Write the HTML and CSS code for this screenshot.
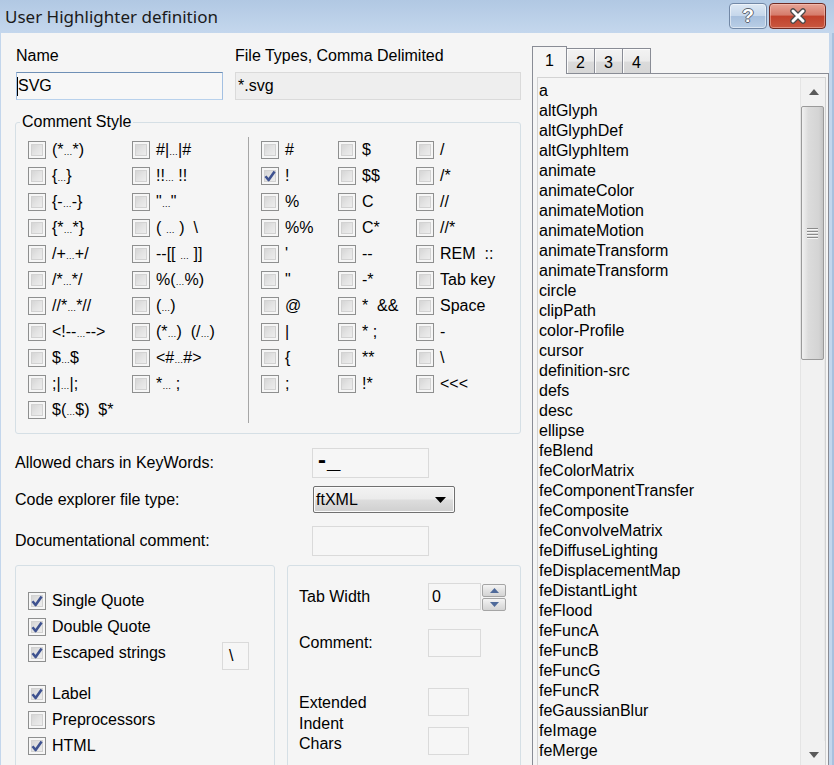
FILE: index.html
```html
<!DOCTYPE html>
<html>
<head>
<meta charset="utf-8">
<title>User Highlighter definition</title>
<link rel="stylesheet" href="styles.css">
</head>
<body>
<div class="window">
  <div class="titlebar">
    <span class="title">User Highlighter definition</span>
    <div class="caption-btns">
      <div class="cbtn help"><span class="help-q">?</span></div>
      <div class="cbtn close">
        <svg width="20" height="16" viewBox="0 0 20 16"><path d="M5 3 L15 13 M15 3 L5 13" stroke="#4a4a4a" stroke-width="5.5" stroke-linecap="round" fill="none"/><path d="M5 3 L15 13 M15 3 L5 13" stroke="#ffffff" stroke-width="3" stroke-linecap="round" fill="none"/></svg>
      </div>
    </div>
  </div>
  <div class="client">
    <div class="left">
      <div class="top-fields">
        <div class="field name-field">
          <label class="lbl">Name</label>
          <div class="input focused"><span class="caret"></span>SVG</div>
        </div>
        <div class="field types-field">
          <label class="lbl">File Types, Comma Delimited</label>
          <div class="input disabled">*.svg</div>
        </div>
      </div>

      <fieldset class="cs-group">
        <legend>Comment Style</legend>
        <div class="cs-body">
          <div class="cs-left">
            <div class="cb-item"><span class="cb"></span><span>(*<span class="el">…</span>*)</span></div>
            <div class="cb-item"><span class="cb"></span><span>#|<span class="el">…</span>|#</span></div>
            <div class="cb-item"><span class="cb"></span><span>{<span class="el">…</span>}</span></div>
            <div class="cb-item"><span class="cb"></span><span>!!<span class="el">…</span> !!</span></div>
            <div class="cb-item"><span class="cb"></span><span>{-<span class="el">…</span>-}</span></div>
            <div class="cb-item"><span class="cb"></span><span>"<span class="el">…</span>"</span></div>
            <div class="cb-item"><span class="cb"></span><span>{*<span class="el">…</span>*}</span></div>
            <div class="cb-item"><span class="cb"></span><span>( <span class="el">…</span> )  \</span></div>
            <div class="cb-item"><span class="cb"></span><span>/+<span class="el">…</span>+/</span></div>
            <div class="cb-item"><span class="cb"></span><span>--[[ <span class="el">…</span> ]]</span></div>
            <div class="cb-item"><span class="cb"></span><span>/*<span class="el">…</span>*/</span></div>
            <div class="cb-item"><span class="cb"></span><span>%(<span class="el">…</span>%)</span></div>
            <div class="cb-item"><span class="cb"></span><span>//*<span class="el">…</span>*//</span></div>
            <div class="cb-item"><span class="cb"></span><span>(<span class="el">…</span>)</span></div>
            <div class="cb-item"><span class="cb"></span><span>&lt;!--<span class="el">…</span>--&gt;</span></div>
            <div class="cb-item"><span class="cb"></span><span>(*<span class="el">…</span>)  (/<span class="el">…</span>)</span></div>
            <div class="cb-item"><span class="cb"></span><span>$<span class="el">…</span>$</span></div>
            <div class="cb-item"><span class="cb"></span><span>&lt;#<span class="el">…</span>#&gt;</span></div>
            <div class="cb-item"><span class="cb"></span><span>;|<span class="el">…</span>|;</span></div>
            <div class="cb-item"><span class="cb"></span><span>*<span class="el">…</span> ;</span></div>
            <div class="cb-item"><span class="cb"></span><span>$(<span class="el">…</span>$)  $*</span></div>
          </div>
          <div class="cs-sep"></div>
          <div class="cs-right">
            <div class="cb-item"><span class="cb"></span><span>#</span></div>
            <div class="cb-item"><span class="cb"></span><span>$</span></div>
            <div class="cb-item"><span class="cb"></span><span>/</span></div>

            <div class="cb-item"><span class="cb"><svg class="chk" viewBox="0 0 16 16"><path d="M3.5 8.2 L6.6 12 L12.6 3.6"/></svg></span><span>!</span></div>
            <div class="cb-item"><span class="cb"></span><span>$$</span></div>
            <div class="cb-item"><span class="cb"></span><span>/*</span></div>

            <div class="cb-item"><span class="cb"></span><span>%</span></div>
            <div class="cb-item"><span class="cb"></span><span>C</span></div>
            <div class="cb-item"><span class="cb"></span><span>//</span></div>

            <div class="cb-item"><span class="cb"></span><span>%%</span></div>
            <div class="cb-item"><span class="cb"></span><span>C*</span></div>
            <div class="cb-item"><span class="cb"></span><span>//*</span></div>

            <div class="cb-item"><span class="cb"></span><span>'</span></div>
            <div class="cb-item"><span class="cb"></span><span>--</span></div>
            <div class="cb-item"><span class="cb"></span><span>REM  ::</span></div>

            <div class="cb-item"><span class="cb"></span><span>"</span></div>
            <div class="cb-item"><span class="cb"></span><span>-*</span></div>
            <div class="cb-item"><span class="cb"></span><span>Tab key</span></div>

            <div class="cb-item"><span class="cb"></span><span>@</span></div>
            <div class="cb-item"><span class="cb"></span><span>*  &amp;&amp;</span></div>
            <div class="cb-item"><span class="cb"></span><span>Space</span></div>

            <div class="cb-item"><span class="cb"></span><span>|</span></div>
            <div class="cb-item"><span class="cb"></span><span>* ;</span></div>
            <div class="cb-item"><span class="cb"></span><span>-</span></div>

            <div class="cb-item"><span class="cb"></span><span>{</span></div>
            <div class="cb-item"><span class="cb"></span><span>**</span></div>
            <div class="cb-item"><span class="cb"></span><span>\</span></div>

            <div class="cb-item"><span class="cb"></span><span>;</span></div>
            <div class="cb-item"><span class="cb"></span><span>!*</span></div>
            <div class="cb-item"><span class="cb"></span><span>&lt;&lt;&lt;</span></div>
          </div>
        </div>
      </fieldset>

      <div class="opt-rows">
        <div class="opt-row r1">
          <span class="opt-lbl">Allowed chars in KeyWords:</span>
          <div class="box box-wide kw">-_</div>
        </div>
        <div class="opt-row r2">
          <span class="opt-lbl">Code explorer file type:</span>
          <div class="dropdown"><span>ftXML</span><svg class="dd-arrow" width="11" height="6" viewBox="0 0 11 6"><polygon points="0,0 11,0 5.5,6" fill="#000"/></svg></div>
        </div>
        <div class="opt-row r3">
          <span class="opt-lbl">Documentational comment:</span>
          <div class="box box-wide"></div>
        </div>
      </div>

      <div class="bottom-groups">
        <div class="grp grp-quotes">
          <div class="cb-item"><span class="cb"><svg class="chk" viewBox="0 0 16 16"><path d="M3.5 8.2 L6.6 12 L12.6 3.6"/></svg></span><span>Single Quote</span></div>
          <div class="cb-item"><span class="cb"><svg class="chk" viewBox="0 0 16 16"><path d="M3.5 8.2 L6.6 12 L12.6 3.6"/></svg></span><span>Double Quote</span></div>
          <div class="cb-item"><span class="cb"><svg class="chk" viewBox="0 0 16 16"><path d="M3.5 8.2 L6.6 12 L12.6 3.6"/></svg></span><span>Escaped strings</span><div class="box esc">\</div></div>
          <div class="cb-item gap-top"><span class="cb"><svg class="chk" viewBox="0 0 16 16"><path d="M3.5 8.2 L6.6 12 L12.6 3.6"/></svg></span><span>Label</span></div>
          <div class="cb-item"><span class="cb"></span><span>Preprocessors</span></div>
          <div class="cb-item"><span class="cb"><svg class="chk" viewBox="0 0 16 16"><path d="M3.5 8.2 L6.6 12 L12.6 3.6"/></svg></span><span>HTML</span></div>
        </div>
        <div class="grp grp-tabs">
          <div class="tw-row">
            <span class="tw-lbl">Tab Width</span>
            <div class="box box-mid">0</div>
            <div class="spin">
              <div class="spin-btn"><svg width="9" height="5" viewBox="0 0 9 5"><polygon points="0,5 9,5 4.5,0" fill="#4f6a9a"/></svg></div>
              <div class="spin-btn"><svg width="9" height="5" viewBox="0 0 9 5"><polygon points="0,0 9,0 4.5,5" fill="#4f6a9a"/></svg></div>
            </div>
          </div>
          <div class="tw-row cm-row">
            <span class="tw-lbl">Comment:</span>
            <div class="box box-mid tall"></div>
          </div>
          <div class="ext-row">
            <span class="tw-lbl ext-lbl">Extended<br>Indent<br>Chars</span>
            <div class="ext-boxes">
              <div class="box box-sm"></div>
              <div class="box box-sm"></div>
            </div>
          </div>
        </div>
      </div>
    </div>

    <div class="right">
      <div class="tabs">
        <div class="tab active">1</div>
        <div class="tab">2</div>
        <div class="tab">3</div>
        <div class="tab">4</div>
      </div>
      <div class="tab-panel">
        <div class="listbox">
          <ul class="list">
            <li>a</li>
            <li>altGlyph</li>
            <li>altGlyphDef</li>
            <li>altGlyphItem</li>
            <li>animate</li>
            <li>animateColor</li>
            <li>animateMotion</li>
            <li>animateMotion</li>
            <li>animateTransform</li>
            <li>animateTransform</li>
            <li>circle</li>
            <li>clipPath</li>
            <li>color-Profile</li>
            <li>cursor</li>
            <li>definition-src</li>
            <li>defs</li>
            <li>desc</li>
            <li>ellipse</li>
            <li>feBlend</li>
            <li>feColorMatrix</li>
            <li>feComponentTransfer</li>
            <li>feComposite</li>
            <li>feConvolveMatrix</li>
            <li>feDiffuseLighting</li>
            <li>feDisplacementMap</li>
            <li>feDistantLight</li>
            <li>feFlood</li>
            <li>feFuncA</li>
            <li>feFuncB</li>
            <li>feFuncG</li>
            <li>feFuncR</li>
            <li>feGaussianBlur</li>
            <li>feImage</li>
            <li>feMerge</li>
          </ul>
          <div class="scrollbar">
            <div class="sb-btn"><svg width="10" height="6" viewBox="0 0 10 6"><polygon points="0,6 10,6 5,0" fill="#5a5a5a"/></svg></div>
            <div class="sb-thumb"><span class="grip"></span></div>
            <div class="sb-track"></div>
            <div class="sb-btn"><svg width="10" height="6" viewBox="0 0 10 6"><polygon points="0,0 10,0 5,6" fill="#5a5a5a"/></svg></div>
          </div>
        </div>
      </div>
    </div>
  </div>
</div>
</body>
</html>
```
FILE: styles.css
```css
* { box-sizing: border-box; }
html, body { margin: 0; padding: 0; }
body {
  width: 834px;
  height: 765px;
  overflow: hidden;
  font-family: "Liberation Sans", Arial, sans-serif;
  font-size: 16px;
  color: #000;
  background: #f5f5f5;
}
.window {
  width: 834px;
  height: 765px;
  display: flex;
  flex-direction: column;
  background: #c3d6ec;
  box-shadow: inset -2px 0 0 #a8c1de, inset -1px 0 0 #d7e6f5;
  overflow: hidden;
}

/* Title bar */
.titlebar {
  height: 33px;
  flex: none;
  display: flex;
  align-items: flex-start;
  padding-left: 5px;
  background: linear-gradient(#b1c8e3, #c4d7ed);
}
.title {
  font-family: "Noto Sans", "Liberation Sans", sans-serif;
  font-size: 17px;
  line-height: 22px;
  margin-top: 6px;
  color: #1a1a1a;
}
.caption-btns {
  margin-left: auto;
  margin-right: 8px;
  margin-top: 3px;
  display: flex;
  gap: 2px;
}
.cbtn {
  height: 26px;
  border-radius: 4px;
  display: flex;
  align-items: center;
  justify-content: center;
}
.help {
  width: 38px;
  border: 1px solid #7288a6;
  background: linear-gradient(#dde8f4 0%, #c6d7eb 48%, #a8c0dd 52%, #b9cee6 100%);
  box-shadow: inset 0 0 0 1px rgba(255,255,255,0.5);
}
.help-q {
  font-family: "Liberation Sans", sans-serif;
  font-weight: bold;
  font-size: 19px;
  line-height: 20px;
  color: #fff;
  text-shadow: 1px 0 #5c6470, -1px 0 #5c6470, 0 1px #5c6470, 0 -1px #5c6470;
}
.close {
  width: 57px;
  border: 1px solid #6f2a22;
  background: linear-gradient(#e6a597 0%, #d67c6c 45%, #c1412c 52%, #c9573f 100%);
  box-shadow: inset 0 0 0 1px rgba(255,210,200,0.45);
}

/* Client */
.client {
  flex: 1;
  display: flex;
  margin-left: 1px;
  margin-right: 5px;
  background: #f5f5f5;
  min-height: 0;
}
.left {
  width: 531px;
  flex: none;
  padding: 13px 0 0 14px;
}
.right {
  flex: 1;
  padding-top: 13px;
  min-width: 0;
}

/* Top fields */
.top-fields {
  display: flex;
  gap: 12px;
  margin-left: 1px;
}
.lbl {
  display: block;
  line-height: 20px;
  margin-bottom: 6px;
}
.name-field { width: 207px; }
.types-field { width: 286px; }
.input {
  height: 28px;
  border: 1px solid #d9d9d9;
  display: flex;
  align-items: center;
  padding-left: 2px;
  background: #f7f7f7;
}
.input.focused {
  padding-left: 0;
  border-color: #6f90b6 #a3c0e2 #b8d1ec #a3c0e2;
}
.caret {
  display: inline-block;
  width: 1px;
  height: 19px;
  background: #000;
  margin-right: 0;
}
.input.disabled {
  background: #eeeeee;
  border-color: #dadada;
}

/* Comment style group */
.cs-group {
  margin: 12px 0 0 0;
  padding: 0;
  width: 506px;
  border: 1px solid #d5dfe5;
  border-radius: 3px;
  min-width: 0;
}
.cs-group legend {
  margin-left: 4px;
  padding: 0 2px;
  line-height: 20px;
  font-size: 16px;
}
.cs-body {
  display: flex;
  padding: 5px 0 10px 12px;
}
.cs-left {
  display: grid;
  grid-template-columns: 104px 116px;
  grid-auto-rows: 26px;
}
.cs-sep {
  width: 1px;
  background: #a6a6a6;
}
.cs-right {
  margin-left: 12px;
  display: grid;
  grid-template-columns: 77px 78px 1fr;
  grid-auto-rows: 26px;
  align-content: start;
}
.cb-item {
  display: flex;
  align-items: center;
  gap: 6px;
  white-space: pre;
  height: 26px;
}
.el { font-size: 9px; }
.cb {
  width: 18px;
  height: 18px;
  flex: none;
  border: 1px solid #8e8f8f;
  background: linear-gradient(135deg, #cdcdcd 0%, #e3e3e3 50%, #f3f3f3 100%);
  box-shadow: inset 0 0 0 2px #f6f6f6, inset 0 0 0 3px #d2d2d2;
  display: block;
}
.chk {
  display: block;
  width: 16px;
  height: 16px;
}
.chk path {
  fill: none;
  stroke: #3e5290;
  stroke-width: 2.6;
  stroke-linejoin: round;
}

/* Option rows */
.opt-rows { margin-top: 14px; }
.opt-row {
  display: flex;
  align-items: center;
}
.opt-lbl {
  width: 297px;
  flex: none;
  line-height: 20px;
}
.r2 { margin-top: 8px; }
.r3 { margin-top: 13px; }
.box {
  border: 1px solid #dadada;
  background: #f6f6f6;
}
.box-wide {
  width: 117px;
  height: 30px;
}
.kw {
  padding-left: 5px;
  font-size: 24px;
  font-weight: bold;
  line-height: 22px;
  letter-spacing: 1px;
}
.dropdown {
  margin-left: 1px;
  width: 142px;
  height: 27px;
  border: 1px solid #707070;
  border-radius: 2px;
  background: linear-gradient(#f3f3f3 0%, #ebebeb 48%, #dddddd 52%, #cfcfcf 100%);
  box-shadow: inset 0 0 0 1px #fbfbfb;
  display: flex;
  align-items: center;
  padding: 0 8px 0 2px;
}
.dd-arrow { margin-left: auto; }

/* Bottom groups */
.bottom-groups {
  display: flex;
  gap: 12px;
  margin-top: 9px;
}
.grp {
  border: 1px solid #d5dfe5;
  border-radius: 3px;
  height: 215px;
}
.grp-quotes {
  width: 260px;
  padding: 22px 0 0 12px;
}
.gap-top { margin-top: 15px; }
.esc {
  width: 27px;
  height: 28px;
  margin-left: auto;
  margin-right: 25px;
  margin-top: 6px;
  padding-left: 6px;
  line-height: 26px;
}
.grp-tabs {
  width: 234px;
  padding: 17px 0 0 11px;
}
.tw-row {
  display: flex;
  align-items: center;
  height: 27px;
}
.tw-lbl {
  width: 129px;
  flex: none;
  line-height: 20px;
}
.box-mid {
  width: 53px;
  height: 27px;
  padding-left: 3px;
  line-height: 25px;
}
.box-mid.tall { height: 28px; }
.spin {
  margin-left: 1px;
  width: 24px;
  display: flex;
  flex-direction: column;
  gap: 1px;
  margin-top: 2px;
}
.spin-btn {
  height: 13px;
  border: 1px solid #a5a5a5;
  border-radius: 2px;
  background: linear-gradient(#f4f4f4, #e3e3e3 50%, #d4d4d4);
  display: flex;
  align-items: center;
  justify-content: center;
}
.cm-row { margin-top: 19px; height: 28px; }
.ext-row {
  display: flex;
  margin-top: 31px;
}
.ext-lbl {
  padding-top: 5px;
  line-height: 20.5px;
}
.ext-boxes {
  display: flex;
  flex-direction: column;
  gap: 11px;
}
.box-sm {
  width: 41px;
  height: 28px;
}

/* Right tabs */
.tabs {
  display: flex;
  align-items: flex-end;
  height: 27px;
  padding-left: 0;
}
.tab {
  width: 29px;
  height: 25px;
  margin-left: -1px;
  border: 1px solid #898c95;
  border-bottom: none;
  background: linear-gradient(#f3f3f3 0%, #ebebeb 50%, #dbdbdb 55%, #d6d6d6 100%);
  box-shadow: inset 1px 1px 0 #fcfcfc;
  text-align: center;
  padding-top: 4px;
  line-height: 20px;
}
.tab.active {
  width: 35px;
  height: 28px;
  margin-left: 0;
  margin-bottom: -1px;
  background: #f5f5f5;
  box-shadow: none;
  position: relative;
  z-index: 1;
}
.tab-panel {
  width: 297px;
  height: 710px;
  border: 1px solid #898c95;
  padding: 3px 2px 0 4px;
}
.listbox {
  height: 693px;
  border: 1px solid #d3d3d3;
  display: flex;
  background: #f5f5f5;
}
.list {
  flex: 1;
  list-style: none;
  margin: 0;
  padding: 3px 0 0 1px;
  line-height: 20px;
  overflow: hidden;
  white-space: nowrap;
}
.scrollbar {
  width: 25px;
  flex: none;
  display: flex;
  flex-direction: column;
  background: #f1f1f1;
  border-left: 1px solid #e4e4e4;
}
.sb-btn {
  height: 28px;
  flex: none;
  display: flex;
  align-items: center;
  justify-content: center;
  padding-left: 1px;
}
.sb-thumb {
  height: 254px;
  flex: none;
  margin: 0 1px 0 0;
  border: 1px solid #9a9a9a;
  border-radius: 2px;
  background: linear-gradient(to right, #f1f1f1 0%, #dcdcdc 30%, #d4d4d4 80%, #c4c4c4 100%);
  display: flex;
  align-items: center;
  justify-content: center;
}
.grip {
  width: 11px;
  height: 11px;
  background: repeating-linear-gradient(#8a8a8a 0 1px, #f6f6f6 1px 2px, transparent 2px 3px);
}
.sb-track {
  flex: 1;
  border-right: 1px solid #e8e8e8;
}
```
